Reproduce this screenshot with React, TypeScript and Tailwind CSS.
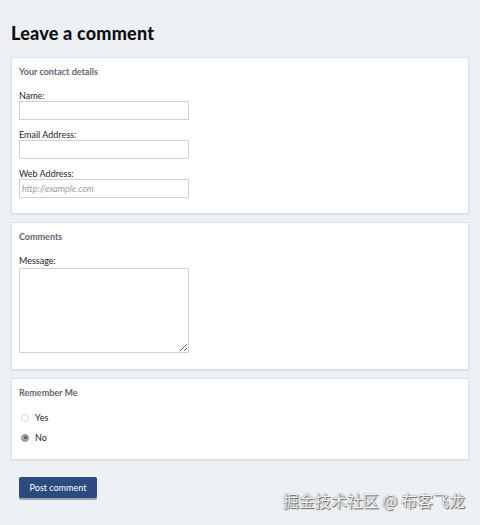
export default function App() {
  return (
    <div
      className="relative min-h-[525px] w-[480px] bg-[#edf1f4] px-[11px] pt-[22px] text-[#1f2328]"
      style={{ fontFamily: "Lato, 'Noto Sans', sans-serif" }}
    >
      <h1 className="mb-[13px] text-[18px] font-black leading-[22px] tracking-[0.2px] text-[#0d0f12]">
        Leave a comment
      </h1>

      {/* Contact details */}
      <section className="mb-[8px] h-[157px] border border-[#dde2e6] bg-white px-[7px] pt-[8px] shadow-[0_1px_1px_rgba(0,0,0,0.05)]">
        <h2 className="text-[9px] font-bold leading-[12px] text-[#5f6670]">Your contact details</h2>
        <div className="mt-[13px] flex flex-col gap-[10px]">
          <div>
            <label className="block text-[9px] leading-[10px]">Name:</label>
            <input className="block h-[19px] w-[170px] border border-[#cdd3d8] bg-white" />
          </div>
          <div>
            <label className="block text-[9px] leading-[10px]">Email Address:</label>
            <input className="block h-[19px] w-[170px] border border-[#cdd3d8] bg-white" />
          </div>
          <div>
            <label className="block text-[9px] leading-[10px]">Web Address:</label>
            <input
              placeholder="http://example.com"
              className="block h-[19px] w-[170px] border border-[#cdd3d8] bg-white px-[2px] text-[9px] italic placeholder:text-[#9aa0a6]"
            />
          </div>
        </div>
      </section>

      {/* Comments */}
      <section className="mb-[8px] h-[148px] border border-[#dde2e6] bg-white px-[7px] pt-[8px] shadow-[0_1px_1px_rgba(0,0,0,0.05)]">
        <h2 className="text-[9px] font-bold leading-[12px] text-[#5f6670]">Comments</h2>
        <label className="mt-[13px] block text-[9px] leading-[10px]">Message:</label>
        <textarea className="mt-[2px] block h-[85px] w-[170px] border border-[#cdd3d8] bg-white" />
      </section>

      {/* Remember me */}
      <section className="h-[82px] border border-[#dde2e6] bg-white px-[7px] pt-[8px] shadow-[0_1px_1px_rgba(0,0,0,0.05)]">
        <h2 className="text-[9px] font-bold leading-[12px] text-[#5f6670]">Remember Me</h2>
        <div className="mt-[13px] flex flex-col gap-[9px] pl-[2px]">
          <label className="flex items-center gap-[6px] text-[9px] leading-[11px]">
            <span className="h-[8px] w-[8px] rounded-full border border-[#d4d8dc] bg-white" />
            Yes
          </label>
          <label className="flex items-center gap-[6px] text-[9px] leading-[11px]">
            <span className="flex h-[8px] w-[8px] items-center justify-center rounded-full border border-[#8a8f95] bg-[#a4a9ae]">
              <span className="h-[3px] w-[3px] rounded-full bg-[#50555b]" />
            </span>
            No
          </label>
        </div>
      </section>

      <button className="ml-[8px] mt-[17px] h-[21px] w-[78px] rounded-[2px] bg-[#2b4a7f] text-[9px] text-white shadow-[0_2px_0_#9aa5b1]">
        Post comment
      </button>

      <div
        className="absolute right-[15px] top-[490px] text-[16px] leading-[20px] text-[#f4f5f6] [text-shadow:0_0_1px_#555,1px_1px_1px_#666]"
        style={{ fontFamily: "'Noto Sans CJK SC', sans-serif" }}
      >
        掘金技术社区 @ 布客飞龙
      </div>
    </div>
  );
}
